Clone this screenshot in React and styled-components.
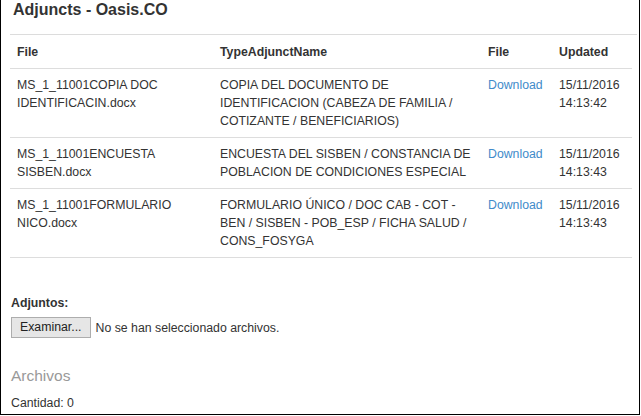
import React from "react";
import styled, { createGlobalStyle } from "styled-components";

const GlobalStyle = createGlobalStyle`
  html, body { margin: 0; padding: 0; background: #fff; }
  body { font-family: "Liberation Sans", Arial, sans-serif; color: #333; }
`;

const Frame = styled.div`
  box-sizing: border-box;
  width: 640px;
  height: 415px;
  border-left: 1px solid #000;
  border-right: 1px solid #000;
  border-bottom: 1px solid #000;
  overflow: hidden;
  padding: 0 2px 0 9px;
  display: flex;
  flex-direction: column;
`;

const Header = styled.div`
  padding: 0 0 14px 3px;
  border-bottom: 1px solid #dcdcdc;
`;

const Title = styled.h2`
  margin: 0;
  font-size: 16px;
  line-height: 20px;
  font-weight: bold;
  color: #333;
`;

const Table = styled.table`
  width: 622px;
  border-collapse: collapse;
  table-layout: fixed;
  font-size: 12.3px;
  line-height: 18px;
`;

const Th = styled.th`
  box-sizing: border-box;
  text-align: left;
  font-weight: bold;
  padding: 7.5px 7px;
  border-bottom: 1px solid #ddd;
  vertical-align: bottom;
  width: ${(p) => p.$w}px;
`;

const Td = styled.td`
  padding: 7px 7px;
  border-top: 1px solid #ddd;
  vertical-align: top;
`;

const Row = styled.tr`
  &:last-child td { border-bottom: 1px solid #ddd; }
`;

const Link = styled.a`
  color: #428bca;
  text-decoration: none;
  white-space: nowrap;
`;

const Upload = styled.div`
  margin-top: 36px;
  padding-left: 1px;
  font-size: 12.3px;
  line-height: 18px;
`;

const Label = styled.div`
  font-weight: bold;
`;

const FileRow = styled.div`
  display: flex;
  align-items: center;
  gap: 5px;
  margin-top: 5px;
`;

const Browse = styled.button`
  font-family: "Liberation Sans", Arial, sans-serif;
  font-size: 12.3px;
  color: #222;
  height: 21px;
  padding: 0 8px;
  background: #e6e6e6;
  border: 1px solid #adadad;
  border-radius: 0;
  line-height: 19px;
`;

const Section = styled.div`
  margin-top: 28px;
  padding-left: 1px;
`;

const SectionTitle = styled.div`
  font-size: 15.5px;
  line-height: 20px;
  color: #999;
`;

const Count = styled.div`
  margin-top: 8px;
  font-size: 12.3px;
  line-height: 18px;
`;

const rows = [
  {
    file: "MS_1_11001COPIA DOC IDENTIFICACIN.docx",
    type: "COPIA DEL DOCUMENTO DE IDENTIFICACION (CABEZA DE FAMILIA / COTIZANTE / BENEFICIARIOS)",
    date: "15/11/2016 14:13:42",
  },
  {
    file: "MS_1_11001ENCUESTA SISBEN.docx",
    type: "ENCUESTA DEL SISBEN / CONSTANCIA DE POBLACION DE CONDICIONES ESPECIAL",
    date: "15/11/2016 14:13:43",
  },
  {
    file: "MS_1_11001FORMULARIO NICO.docx",
    type: "FORMULARIO ÚNICO / DOC CAB - COT - BEN / SISBEN - POB_ESP / FICHA SALUD / CONS_FOSYGA",
    date: "15/11/2016 14:13:43",
  },
];

export default function App() {
  return (
    <>
      <GlobalStyle />
      <Frame>
        <Header>
          <Title>Adjuncts - Oasis.CO</Title>
        </Header>
        <Table>
          <thead>
            <tr>
              <Th $w={203}>File</Th>
              <Th $w={268}>TypeAdjunctName</Th>
              <Th $w={71}>File</Th>
              <Th $w={80}>Updated</Th>
            </tr>
          </thead>
          <tbody>
            {rows.map((r, i) => (
              <Row key={i}>
                <Td>{r.file}</Td>
                <Td>{r.type}</Td>
                <Td>
                  <Link href="#">Download</Link>
                </Td>
                <Td>{r.date}</Td>
              </Row>
            ))}
          </tbody>
        </Table>
        <Upload>
          <Label>Adjuntos:</Label>
          <FileRow>
            <Browse type="button">Examinar...</Browse>
            <span>No se han seleccionado archivos.</span>
          </FileRow>
        </Upload>
        <Section>
          <SectionTitle>Archivos</SectionTitle>
          <Count>Cantidad: 0</Count>
        </Section>
      </Frame>
    </>
  );
}
